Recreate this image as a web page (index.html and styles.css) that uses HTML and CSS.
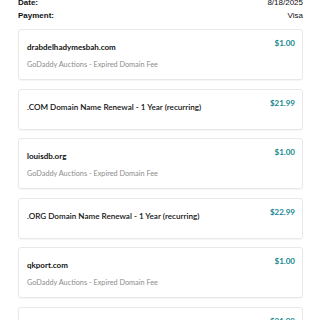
FILE: index.html
```html
<!DOCTYPE html>
<html lang="en">
<head>
<meta charset="UTF-8">
<meta name="viewport" content="width=device-width, initial-scale=1.0">
<title>Receipt</title>
<link rel="stylesheet" href="styles.css">
</head>
<body>
    <div class="receipt">
        <div class="summary">
            <div class="summary-row">
                <span class="label">Date:</span>
                <span class="value">8/18/2025</span>
            </div>
            <div class="summary-row">
                <span class="label">Payment:</span>
                <span class="value">Visa</span>
            </div>
        </div>
        <div class="items">
            <div class="item">
                <div class="item-info">
                    <div class="item-name">drabdelhadymesbah.com</div>
                    <div class="item-desc">GoDaddy Auctions - Expired Domain Fee</div>
                </div>
                <div class="item-price">$1.00</div>
            </div>
            <div class="item">
                <div class="item-info">
                    <div class="item-name plain">.COM Domain Name Renewal - 1 Year (recurring)</div>
                    <div class="item-desc"></div>
                </div>
                <div class="item-price">$21.99</div>
            </div>
            <div class="item">
                <div class="item-info">
                    <div class="item-name">louisdb.org</div>
                    <div class="item-desc">GoDaddy Auctions - Expired Domain Fee</div>
                </div>
                <div class="item-price">$1.00</div>
            </div>
            <div class="item">
                <div class="item-info">
                    <div class="item-name plain">.ORG Domain Name Renewal - 1 Year (recurring)</div>
                    <div class="item-desc"></div>
                </div>
                <div class="item-price">$22.99</div>
            </div>
            <div class="item">
                <div class="item-info">
                    <div class="item-name">qkport.com</div>
                    <div class="item-desc">GoDaddy Auctions - Expired Domain Fee</div>
                </div>
                <div class="item-price">$1.00</div>
            </div>
            <div class="item">
                <div class="item-info">
                    <div class="item-name plain">.COM Domain Name Renewal - 1 Year (recurring)</div>
                    <div class="item-desc"></div>
                </div>
                <div class="item-price">$21.99</div>
            </div>
        </div>
    </div>
</body>
</html>
```

FILE: styles.css
```css
body, html {
    margin: 0;
    padding: 0;
    background-color: #fff;
}
body {
    overflow: hidden;
}
.receipt {
    margin-top: -4.5px;
    padding: 0 17px 0 18px;
    font-family: 'Lato', 'Liberation Sans', sans-serif;
}
.summary-row {
    display: flex;
    justify-content: space-between;
    font-family: 'Liberation Sans', Arial, sans-serif;
    font-size: 8px;
    line-height: 13px;
    color: #111;
}
.summary-row .label {
    font-weight: bold;
}
.items {
    margin-top: 7.5px;
}
.item {
    display: flex;
    justify-content: space-between;
    align-items: flex-start;
    padding: 8px 7px 9px 8px;
    margin-bottom: 8.5px;
    border: 1px solid #e8e8e8;
    border-radius: 3px;
    box-shadow: 0 1px 1px rgba(0, 0, 0, 0.04);
}
.item-name {
    margin-top: 4px;
    font-size: 8px;
    line-height: 10px;
    font-weight: bold;
    color: #111;
}
.item-name.plain {
    font-weight: 600;
    font-size: 8.1px;
}
.item-desc {
    margin-top: 8px;
    font-size: 7.3px;
    line-height: 10px;
    color: #8c8c8c;
}
.item-price {
    font-size: 8px;
    line-height: 10px;
    font-weight: bold;
    color: #16888e;
}
```
